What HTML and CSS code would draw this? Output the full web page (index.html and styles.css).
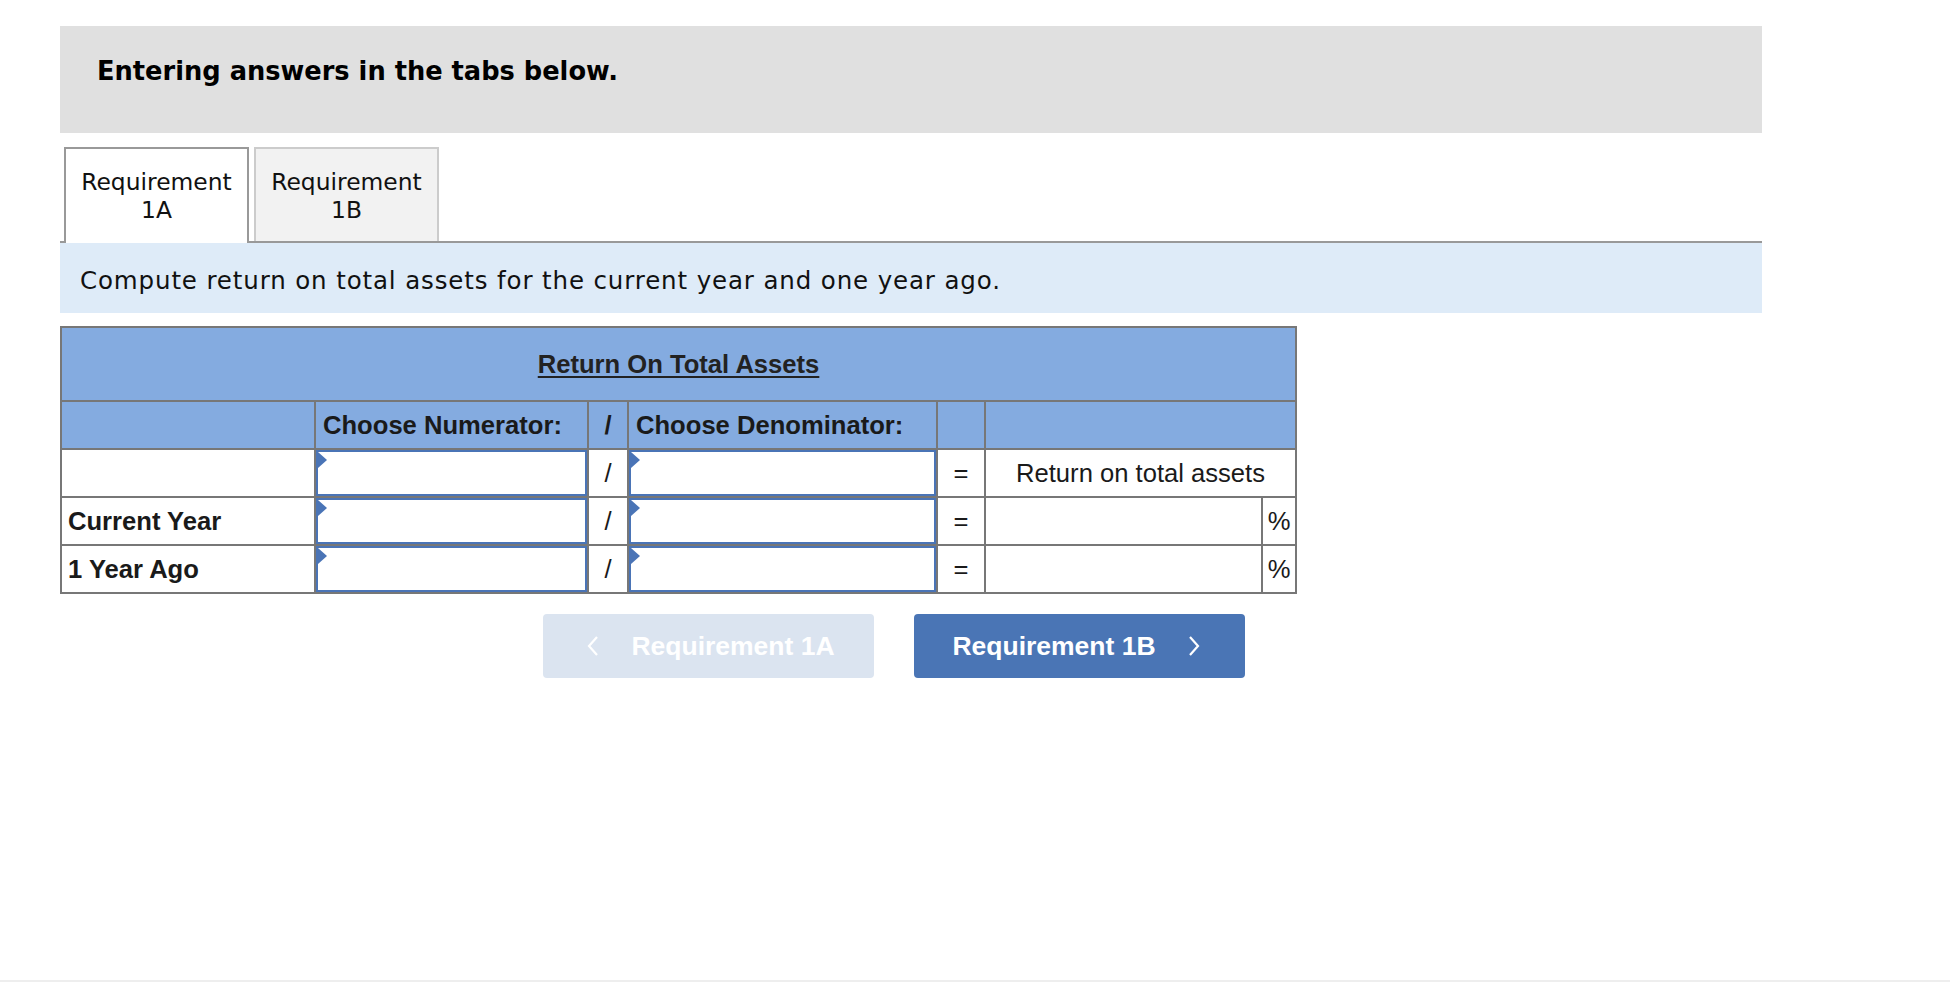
FILE: index.html
```html
<!DOCTYPE html>
<html lang="en">
<head>
<meta charset="utf-8">
<title>Return On Total Assets</title>
<link rel="stylesheet" href="styles.css">
</head>
<body>
<div class="page">
  <main class="main">
    <div class="banner">
      <h1 class="banner-title">Entering answers in the tabs below.</h1>
    </div>

    <div class="tabs">
      <div class="tab tab-active">Requirement<br>1A</div>
      <div class="tab">Requirement<br>1B</div>
    </div>

    <div class="instruction">Compute return on total assets for the current year and one year ago.</div>

    <table class="ratio">
      <colgroup>
        <col class="c-label">
        <col class="c-num">
        <col class="c-slash">
        <col class="c-den">
        <col class="c-eq">
        <col class="c-res">
        <col class="c-pct">
      </colgroup>
      <tr class="head-title">
        <th colspan="7"><span class="title-text">Return On Total Assets</span></th>
      </tr>
      <tr class="head-cols">
        <th></th>
        <th class="left">Choose Numerator:</th>
        <th>/</th>
        <th class="left">Choose Denominator:</th>
        <th></th>
        <th colspan="2"></th>
      </tr>
      <tr class="row">
        <td class="label"></td>
        <td class="in-cell"><div class="field"><span class="flag"></span></div></td>
        <td class="op">/</td>
        <td class="in-cell"><div class="field"><span class="flag"></span></div></td>
        <td class="op">=</td>
        <td class="result-label" colspan="2">Return on total assets</td>
      </tr>
      <tr class="row">
        <td class="label">Current Year</td>
        <td class="in-cell"><div class="field"><span class="flag"></span></div></td>
        <td class="op">/</td>
        <td class="in-cell"><div class="field"><span class="flag"></span></div></td>
        <td class="op">=</td>
        <td class="result"></td>
        <td class="op">%</td>
      </tr>
      <tr class="row">
        <td class="label">1 Year Ago</td>
        <td class="in-cell"><div class="field"><span class="flag"></span></div></td>
        <td class="op">/</td>
        <td class="in-cell"><div class="field"><span class="flag"></span></div></td>
        <td class="op">=</td>
        <td class="result"></td>
        <td class="op">%</td>
      </tr>
    </table>

    <div class="nav">
      <button class="btn btn-disabled" type="button">
        <svg class="chev" width="12" height="22" viewBox="0 0 12 22"><polyline points="10,2 2,11 10,20" fill="none" stroke="#fff" stroke-width="2.2"/></svg>
        <span>Requirement 1A</span>
      </button>
      <button class="btn btn-primary" type="button">
        <span>Requirement 1B</span>
        <svg class="chev" width="12" height="22" viewBox="0 0 12 22"><polyline points="2,2 10,11 2,20" fill="none" stroke="#fff" stroke-width="2.2"/></svg>
      </button>
    </div>
  </main>
  <footer class="footer"></footer>
</div>
</body>
</html>
```

FILE: styles.css
```css
body {
  margin: 0;
  background: #ffffff;
  font-family: "DejaVu Sans", Verdana, sans-serif;
  color: #111111;
}

.page {
  height: 992px;
  display: flex;
  flex-direction: column;
}

.main {
  flex: 1;
  padding: 26px 0 0 60px;
}

.banner {
  width: 1702px;
  height: 107px;
  box-sizing: border-box;
  background: #e0e0e0;
  padding: 30px 0 0 37px;
}

.banner-title {
  margin: 0;
  font-size: 25.7px;
  line-height: 30px;
  font-weight: bold;
  letter-spacing: 0;
  color: #000000;
}

.tabs {
  margin-top: 14px;
  width: 1702px;
  box-sizing: border-box;
  display: flex;
  align-items: flex-start;
  gap: 5px;
  padding-left: 4px;
  border-bottom: 2px solid #999999;
}

.tab {
  width: 185px;
  height: 94px;
  box-sizing: border-box;
  border: 2px solid #cccccc;
  border-bottom: none;
  background: #f2f2f2;
  text-align: center;
  font-size: 23.4px;
  line-height: 28px;
  padding-top: 19px;
  color: #111111;
}

.tab-active {
  height: 96px;
  margin-bottom: -2px;
  border-color: #999999;
  background: #ffffff;
}

.instruction {
  width: 1702px;
  height: 70px;
  box-sizing: border-box;
  background: #deebf8;
  padding: 4px 0 0 20px;
  display: flex;
  align-items: center;
  font-size: 24.5px;
  letter-spacing: 0.87px;
  color: #111111;
}

.ratio {
  margin-top: 13px;
  border-collapse: collapse;
  table-layout: fixed;
  width: 1235px;
  font-family: "Liberation Sans", Arial, sans-serif;
  font-size: 25.6px;
  color: #1a1a1a;
}

.c-label { width: 254px; }
.c-num { width: 273px; }
.c-slash { width: 40px; }
.c-den { width: 309px; }
.c-eq { width: 48px; }
.c-res { width: 277px; }
.c-pct { width: 34px; }

.ratio th,
.ratio td {
  border: 2px solid #777777;
  padding: 0;
}

.ratio th {
  background: #84abe0;
  font-weight: bold;
  text-align: center;
}

.head-title th {
  height: 72px;
}

.title-text {
  text-decoration: underline;
  text-underline-offset: 3px;
  color: #222222;
}

.head-cols th {
  height: 46px;
}

.ratio th.left {
  text-align: left;
  padding-left: 7px;
}

.row td {
  height: 46px;
  background: #ffffff;
}

.ratio td.label {
  font-weight: bold;
  padding-left: 6px;
}

.op {
  text-align: center;
}

.result-label {
  text-align: center;
}

.field {
  position: relative;
  height: 46px;
  box-sizing: border-box;
  border: 2px solid #4a74b6;
  background: #ffffff;
}

.flag {
  position: absolute;
  left: 0;
  top: 0;
  width: 0;
  height: 0;
  border-left: 9px solid #4a74b6;
  border-top: 8px solid transparent;
  border-bottom: 8px solid transparent;
}

.nav {
  margin-top: 20px;
  padding-left: 483px;
  display: flex;
  gap: 40px;
}

.btn {
  width: 331px;
  height: 64px;
  border: none;
  border-radius: 4px;
  display: flex;
  align-items: center;
  justify-content: center;
  gap: 32px;
  padding: 0;
  font-family: "Liberation Sans", Arial, sans-serif;
  font-weight: bold;
  font-size: 26.5px;
  color: #ffffff;
}

.btn-disabled {
  background: #dbe4f0;
  padding-left: 5px;
}

.btn-primary {
  background: #4a75b5;
  padding-right: 7px;
}

.chev {
  display: block;
}

.footer {
  height: 10px;
  border-top: 2px solid #eeeeee;
}
```
